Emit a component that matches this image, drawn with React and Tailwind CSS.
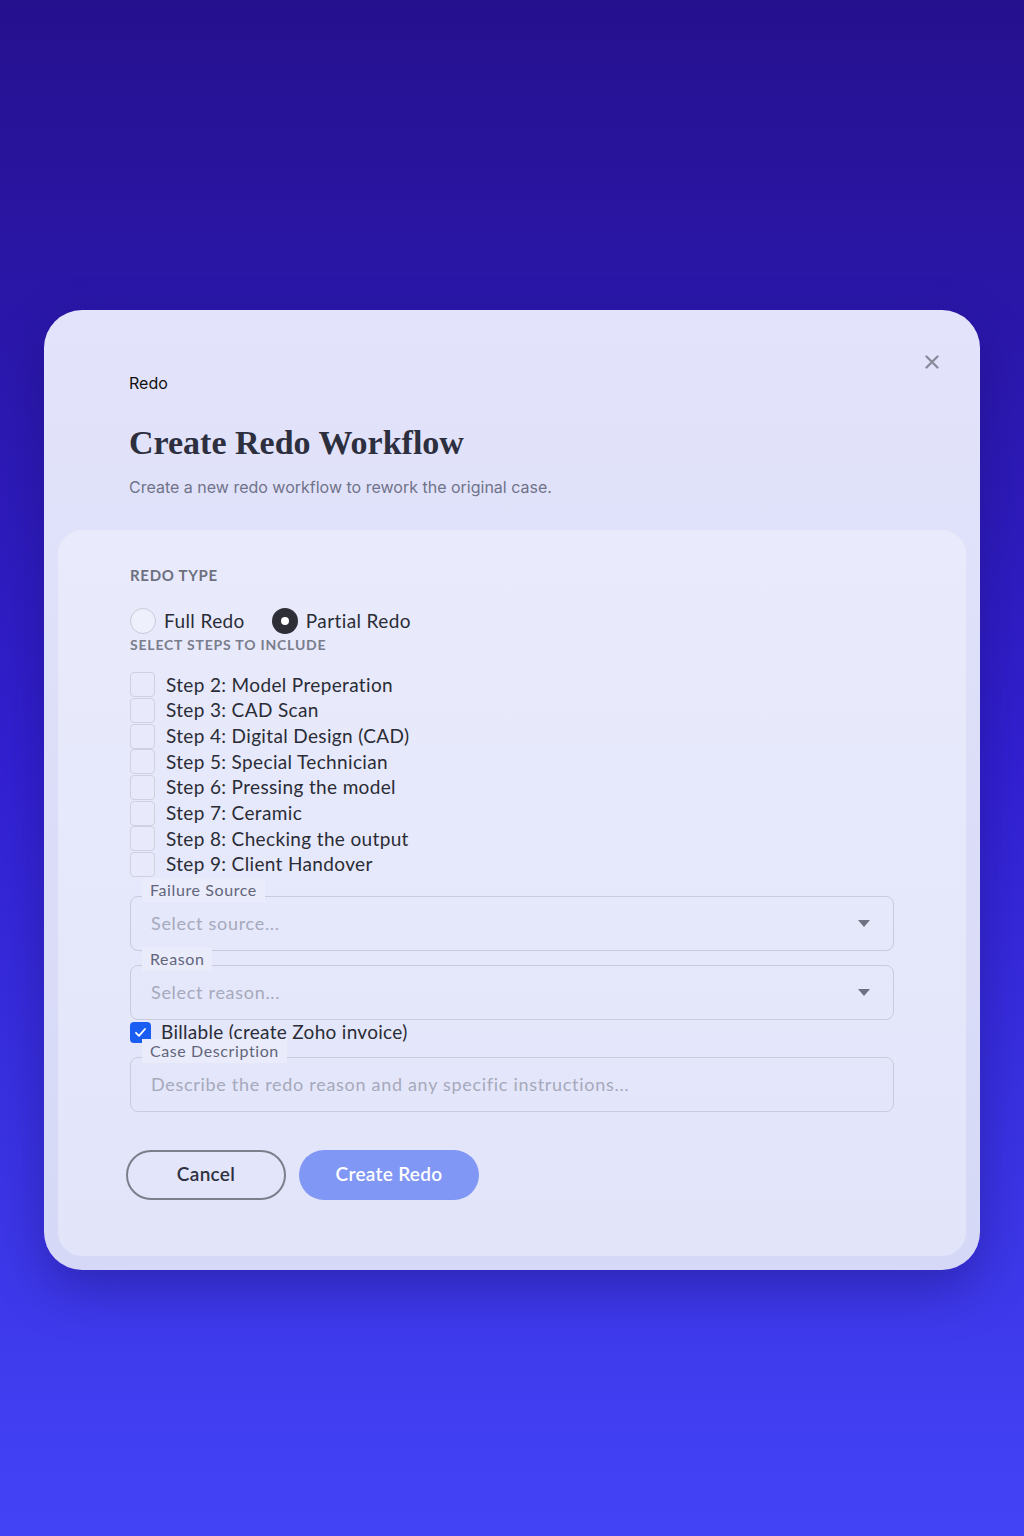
import React from "react";

const steps = [
  "Step 2: Model Preperation",
  "Step 3: CAD Scan",
  "Step 4: Digital Design (CAD)",
  "Step 5: Special Technician",
  "Step 6: Pressing the model",
  "Step 7: Ceramic",
  "Step 8: Checking the output",
  "Step 9: Client Handover",
];

const lato = { fontFamily: "Lato, 'Noto Sans', sans-serif" };

function Caret() {
  return (
    <svg width="12" height="7" viewBox="0 0 12 7" className="shrink-0">
      <path d="M0 0 L12 0 L6 7 Z" fill="#6f7180" />
    </svg>
  );
}

function OutlinedField({ label, placeholder, select }) {
  return (
    <div className="relative">
      <span className="absolute left-[12px] -top-[18px] px-[8px] text-[16px] leading-[24px] tracking-[0.6px] text-[#62657a] bg-[#eaecfc]">
        {label}
      </span>
      <div className="h-[55px] rounded-[8px] border border-[#c9cbdc] flex items-center justify-between pl-[20px] pr-[23px]">
        <span className="text-[18px] text-[#a6a9bb] tracking-[0.7px]">{placeholder}</span>
        {select && <Caret />}
      </div>
    </div>
  );
}

export default function App() {
  return (
    <div className="h-[1536px] w-full bg-linear-to-b from-[#25118e] via-[#3220d2] to-[#4343f6] pt-[310px] px-[44px]">
      <div className="relative h-[960px] rounded-[38px] bg-linear-to-b from-[#e3e4fb] to-[#d5d8f6] shadow-[0_20px_50px_rgba(20,10,90,0.35)] flex flex-col">
        <button className="absolute right-[40px] top-[44px] text-[#8a8c9c]" title="Close">
          <svg width="16" height="16" viewBox="0 0 16 16">
            <path d="M2.5 2.5 L13.5 13.5 M13.5 2.5 L2.5 13.5" stroke="#8a8c9c" strokeWidth="2.4" strokeLinecap="round" />
          </svg>
        </button>

        <div className="pt-[61px] px-[85px] pb-[31px]" style={{ fontFamily: "Inter, sans-serif" }}>
          <div className="text-[16px] leading-[24px] text-[#111]">Redo</div>
          <h1
            className="mt-[28px] text-[34px] leading-[40px] font-bold text-[#2d2f3e]"
            style={{ fontFamily: "'Liberation Serif', 'DejaVu Serif', serif" }}
          >
            Create Redo Workflow
          </h1>
          <p className="mt-[12px] text-[16px] leading-[24px] text-[#707389]">
            Create a new redo workflow to rework the original case.
          </p>
        </div>

        <div
          className="mx-[14px] flex-1 mb-[14px] rounded-[24px] bg-linear-to-b from-[#e9ebfc] to-[#e2e5fa] px-[72px] pt-[35px]"
          style={lato}
        >
          <div className="text-[15px] leading-[20px] font-bold text-[#6d7080] tracking-[0.7px]">REDO TYPE</div>

          <div className="mt-[23px] flex items-center h-[26px]">
            <label className="flex items-center gap-[8px]">
              <span className="w-[26px] h-[26px] rounded-full border border-[#c8cad8] bg-[#eef0fc]" />
              <span className="text-[19px] text-[#2a2c36] tracking-[0.4px]">Full Redo</span>
            </label>
            <label className="flex items-center gap-[8px] ml-[27px]">
              <span className="w-[26px] h-[26px] rounded-full bg-[#2d2e36] flex items-center justify-center">
                <span className="w-[8px] h-[8px] rounded-full bg-white" />
              </span>
              <span className="text-[19px] text-[#2a2c36] tracking-[0.4px]">Partial Redo</span>
            </label>
          </div>

          <div className="mt-[1px] text-[14px] leading-[20px] font-bold text-[#7a7d8c] tracking-[0.8px]">
            SELECT STEPS TO INCLUDE
          </div>

          <div className="mt-[17px] flex flex-col">
            {steps.map((s) => (
              <label key={s} className="flex items-center gap-[11px] h-[25.7px]">
                <span className="w-[25px] h-[25px] rounded-[4px] border border-[#cfd1de] bg-[#e8eafb]" />
                <span className="text-[19px] text-[#2a2c36] tracking-[0.35px]">{s}</span>
              </label>
            ))}
          </div>

          <div className="mt-[18px]">
            <OutlinedField label="Failure Source" placeholder="Select source..." select />
          </div>
          <div className="mt-[14px]">
            <OutlinedField label="Reason" placeholder="Select reason..." select />
          </div>

          <label className="mt-[2px] flex items-center gap-[10px] h-[22px]">
            <span className="w-[21px] h-[21px] rounded-[4px] bg-[#1a5df2] flex items-center justify-center">
              <svg width="13" height="13" viewBox="0 0 13 13">
                <path d="M2 6.8 L5 9.8 L11 3" stroke="white" strokeWidth="1.8" fill="none" strokeLinecap="round" strokeLinejoin="round" />
              </svg>
            </span>
            <span className="text-[19px] text-[#2a2c36] tracking-[0.3px]">Billable (create Zoho invoice)</span>
          </label>

          <div className="mt-[13px]">
            <OutlinedField label="Case Description" placeholder="Describe the redo reason and any specific instructions..." />
          </div>

          <div className="mt-[38px] -ml-[4px] flex items-center gap-[13px]">
            <button className="w-[160px] h-[50px] rounded-full border-2 border-[#7c7e8c] text-[19px] font-semibold text-[#2f3140] tracking-[0.3px]">
              Cancel
            </button>
            <button className="w-[180px] h-[50px] rounded-full bg-[#8197f5] text-[19px] font-semibold text-white tracking-[0.3px]">
              Create Redo
            </button>
          </div>
        </div>
      </div>
    </div>
  );
}
